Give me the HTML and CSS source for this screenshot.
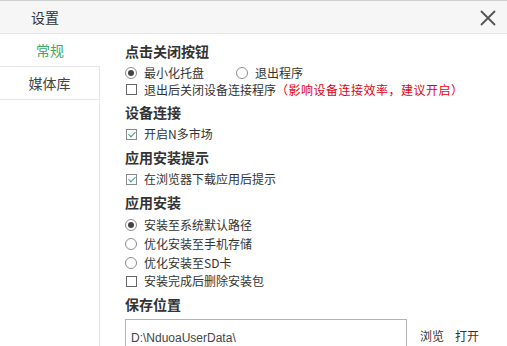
FILE: index.html
```html
<!DOCTYPE html>
<html lang="zh-CN">
<head>
  <meta charset="UTF-8">
  <meta name="viewport" content="width=device-width, initial-scale=1.0">
  <title>设置</title>
  <link rel="stylesheet" href="styles.css">
</head>
<body>
  <div class="titlebar">
    <span class="title">设置</span>
    <span class="close">
      <svg width="16" height="16" viewBox="0 0 16 16"><path d="M1 1L15 15M15 1L1 15" stroke="#555" stroke-width="1.8" fill="none"/></svg>
    </span>
  </div>

  <div class="main">
    <ul class="tabs">
      <li class="tab active">常规</li>
      <li class="tab">媒体库</li>
    </ul>

    <div class="content">
      <div class="group">
        <h3>点击关闭按钮</h3>
        <div class="inline tight">
          <label class="opt"><span class="radio checked"></span>最小化托盘</label>
          <label class="opt second"><span class="radio"></span>退出程序</label>
        </div>
        <label class="opt tight"><span class="check"></span>退出后关闭设备连接程序<span class="warn">（影响设备连接效率，建议开启）</span></label>
      </div>

      <div class="group">
        <h3>设备连接</h3>
        <label class="opt"><span class="check checked"></span>开启N多市场</label>
      </div>

      <div class="group">
        <h3>应用安装提示</h3>
        <label class="opt"><span class="check checked"></span>在浏览器下载应用后提示</label>
      </div>

      <div class="group">
        <h3>应用安装</h3>
        <label class="opt tall"><span class="radio checked"></span>安装至系统默认路径</label>
        <label class="opt tall"><span class="radio"></span>优化安装至手机存储</label>
        <label class="opt tall"><span class="radio"></span>优化安装至SD卡</label>
        <label class="opt"><span class="check"></span>安装完成后删除安装包</label>
      </div>

      <div class="group">
        <h3>保存位置</h3>
        <div class="path-row">
          <div class="path">D:\NduoaUserData\</div>
          <a class="link">浏览</a>
          <a class="link">打开</a>
        </div>
      </div>
    </div>
  </div>
</body>
</html>
```

FILE: styles.css
```css
body {
  margin: 0;
  height: 346px;
  overflow: hidden;
  box-sizing: border-box;
  border-top: 1px solid #cfcfcf;
  background: #fff;
  color: #333;
  font-family: "Noto Sans CJK SC", "Microsoft YaHei", sans-serif;
  font-size: 12px;
}
.titlebar {
  height: 32px;
  background: #f6f6f6;
  border-bottom: 1px solid #e6e6e6;
  display: flex;
  align-items: center;
  justify-content: space-between;
  padding: 0 11px 0 31px;
}
.title {
  font-size: 14px;
  line-height: 32px;
}
.close {
  display: flex;
  margin-top: 2px;
}
.main {
  display: flex;
  height: 312px;
}
.tabs {
  list-style: none;
  margin: 0;
  padding: 0;
  width: 100px;
  box-sizing: border-box;
  border-right: 1px solid #e6e6e6;
}
.tab {
  height: 32px;
  line-height: 32px;
  border-bottom: 1px solid #e6e6e6;
  text-align: center;
  font-size: 14px;
  color: #444;
}
.tab.active {
  color: #3aaa6a;
  background: #fff;
  margin-right: -1px;
  position: relative;
}
.content {
  flex: 1;
  padding: 7px 0 0 25px;
}
h3 {
  margin: 0 0 3px;
  font-size: 14px;
  font-weight: bold;
  line-height: 20px;
}
.group + .group {
  margin-top: 4px;
}
.inline {
  display: flex;
}
.opt {
  display: flex;
  align-items: center;
  height: 18px;
  line-height: 18px;
  white-space: nowrap;
}
.tight,
.inline.tight .opt {
  height: 17px;
}
.opt.tall {
  height: 19px;
}
.opt.second {
  margin-left: 32px;
}
.radio {
  width: 12px;
  height: 12px;
  box-sizing: border-box;
  border: 1px solid #8c8c8c;
  border-radius: 50%;
  margin-right: 7px;
  display: flex;
  align-items: center;
  justify-content: center;
}
.radio.checked::after {
  content: "";
  width: 6px;
  height: 6px;
  border-radius: 50%;
  background: #444;
}
.check {
  width: 11px;
  height: 11px;
  box-sizing: border-box;
  border: 1px solid #666;
  margin: 0 7px 0 1px;
  position: relative;
}
.check.checked {
  border-color: #8a8a8a;
}
.check.checked::after {
  content: "";
  position: absolute;
  left: 3px;
  top: 0px;
  width: 3px;
  height: 6px;
  border-right: 1.5px solid #3aa876;
  border-bottom: 1.5px solid #3aa876;
  transform: rotate(45deg);
}
.warn {
  color: #e60012;
  font-feature-settings: "fwid" 1;
  letter-spacing: 0.5px;
}
.path-row {
  display: flex;
  align-items: flex-start;
  margin-top: 5px;
}
.path {
  width: 282px;
  height: 34px;
  box-sizing: border-box;
  border: 1px solid #b3b3b3;
  padding: 10px 0 0 5px;
  line-height: 16px;
  font-family: "Liberation Sans", Arial, sans-serif;
  color: #444;
}
.link {
  margin-top: 9px;
  margin-left: 13px;
  line-height: 16px;
  color: #333;
}
.link + .link {
  margin-left: 11px;
}
```
